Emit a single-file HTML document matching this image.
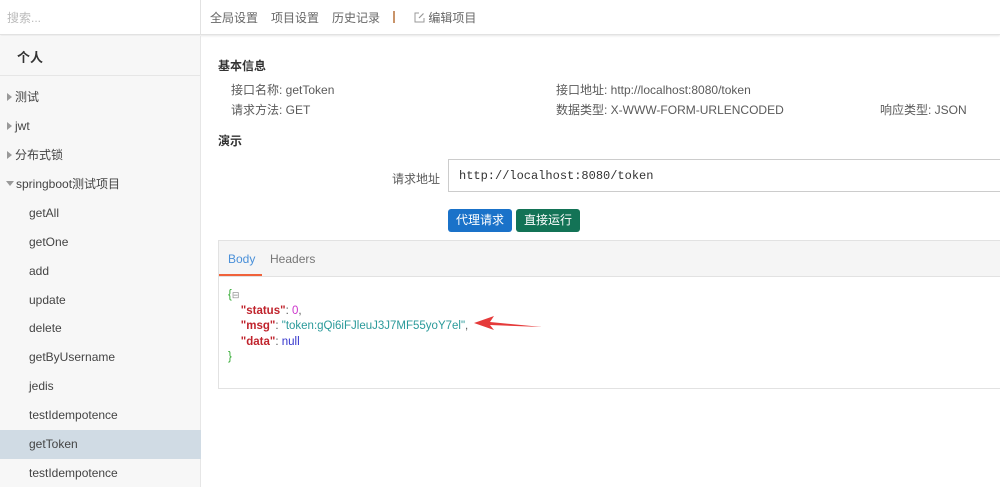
<!DOCTYPE html>
<html><head><meta charset="utf-8"><style>
*{box-sizing:border-box;margin:0;padding:0}
body{width:1000px;height:487px;overflow:hidden;background:#fff;font-family:"Liberation Sans","Noto Sans CJK SC",sans-serif;font-size:12px;color:#5a5a5a;position:relative}
.top{position:absolute;left:0;top:0;width:1000px;height:35px;border-bottom:1px solid #e2e2e2;box-shadow:0 1px 2px #e6e6e6}
.search{position:absolute;left:0;top:0;width:201px;height:35px;border-right:1px solid #e2e2e2;color:#bbb;padding:9px 7px}
.nav{position:absolute;left:210px;top:9px;color:#666}
.nav span{margin-right:13px}
.side{position:absolute;left:0;top:36px;width:201px;height:451px;background:#f7f7f7;border-right:1px solid #e6e6e6}
.side .hd{height:40px;border-bottom:1px solid #e6e6e6;font-weight:bold;color:#333;padding:11px 17px;font-size:13px}
.it{position:absolute;left:0;width:201px;height:29px;line-height:29px;color:#444}
.tri{display:inline-block;width:0;height:0;border-left:5px solid #999;border-top:4px solid transparent;border-bottom:4px solid transparent;margin:0 3px 0 7px}
.trd{display:inline-block;width:0;height:0;border-top:5px solid #999;border-left:4px solid transparent;border-right:4px solid transparent;margin:0 2px 2px 6px}
.sub{padding-left:29px}
.sel{background:#d0dbe4}
.main{position:absolute;left:218px}
.b{font-weight:bold;color:#333}
.inp{position:absolute;left:448px;top:159px;width:560px;height:33px;border:1px solid #ccc;font-family:"Liberation Mono",monospace;color:#333;padding:9px 10px}
.btn{position:absolute;top:209px;height:23px;border-radius:3px;color:#fff;line-height:23px;text-align:center}
.box{position:absolute;left:218px;top:240px;width:800px;height:149px;border:1px solid #e2e2e2}
.tabs{height:36px;background:#f5f5f5;border-bottom:1px solid #e2e2e2;position:relative}
.json{padding:11px 9px;line-height:15.5px;font-size:11.5px}
.k{color:#c0232c;font-weight:bold}
</style></head><body>
<div class="top"><div class="search">搜索...</div>
<div class="nav"><span>全局设置</span><span>项目设置</span><span>历史记录</span><span style="display:inline-block;width:2px;height:12px;background:#c9946a;vertical-align:-1px;margin:0 19px 0 0"></span><span><svg width="11" height="11" viewBox="0 0 11 11" style="vertical-align:-1px"><path d="M5 1H1v9h9V6" fill="none" stroke="#999" stroke-width="1"/><path d="M9.5 1.5L5 6" stroke="#999" stroke-width="1.2"/></svg> 编辑项目</span></div></div>
<div class="side"><div class="hd">个人</div></div>
<div class="it" style="top:83px"><span class="tri"></span>测试</div>
<div class="it" style="top:112px"><span class="tri"></span>jwt</div>
<div class="it" style="top:141px"><span class="tri"></span>分布式锁</div>
<div class="it" style="top:170px"><span class="trd"></span>springboot测试项目</div>
<div class="it sub" style="top:199px">getAll</div>
<div class="it sub" style="top:228px">getOne</div>
<div class="it sub" style="top:257px">add</div>
<div class="it sub" style="top:286px">update</div>
<div class="it sub" style="top:314px">delete</div>
<div class="it sub" style="top:343px">getByUsername</div>
<div class="it sub" style="top:372px">jedis</div>
<div class="it sub" style="top:401px">testIdempotence</div>
<div class="it sub sel" style="top:430px">getToken</div>
<div class="it sub" style="top:459px">testIdempotence</div>
<div class="main b" style="top:57px">基本信息</div>
<div class="main" style="left:231px;top:81px">接口名称: getToken</div>
<div class="main" style="left:231px;top:101px">请求方法: GET</div>
<div class="main" style="left:556px;top:81px">接口地址: http://localhost:8080/token</div>
<div class="main" style="left:556px;top:101px">数据类型: X-WWW-FORM-URLENCODED</div>
<div class="main" style="left:880px;top:101px">响应类型: JSON</div>
<div class="main b" style="top:132px">演示</div>
<div class="main" style="left:392px;top:170px">请求地址</div>
<div class="inp">http://localhost:8080/token</div>
<div class="btn" style="left:448px;width:64px;background:#1a72c9">代理请求</div>
<div class="btn" style="left:516px;width:64px;background:#137356">直接运行</div>
<div class="box"><div class="tabs">
<span style="position:absolute;left:9px;top:11px;color:#4a90d9">Body</span>
<span style="position:absolute;left:51px;top:11px;color:#777">Headers</span>
<div style="position:absolute;left:0;top:33px;width:43px;height:2px;background:#f0623a"></div></div>
<div class="json"><span style="color:#3a3">{</span><span style="font-size:9px;color:#888">⊟</span><br>
&nbsp;&nbsp;&nbsp;&nbsp;<span class="k">"status"</span>: <span style="color:#c3c">0</span>,<br>
&nbsp;&nbsp;&nbsp;&nbsp;<span class="k">"msg"</span>: <span style="color:#2a9a9a">"token:gQi6iFJleuJ3J7MF55yoY7el"</span>,<br>
&nbsp;&nbsp;&nbsp;&nbsp;<span class="k">"data"</span>: <span style="color:#33c">null</span><br>
<span style="color:#3a3">}</span></div></div>
<svg style="position:absolute;left:472px;top:315px" width="72" height="16"><polygon points="2,8 22,1 18,7 70,12 18,10 22,15" fill="#e53a3a"/></svg>
</body></html>
